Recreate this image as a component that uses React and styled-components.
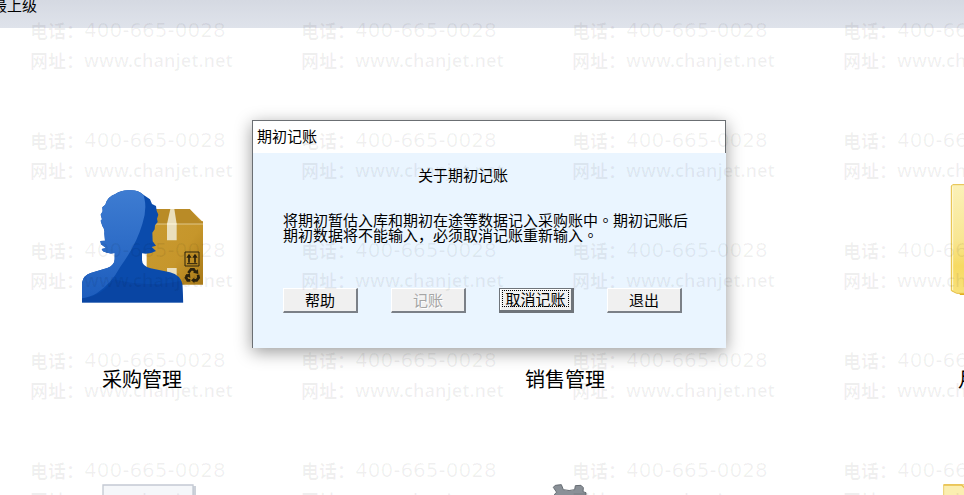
import styled, {createGlobalStyle} from 'styled-components'

const tiles = [
  {id: 'purchase', label: '采购管理', Icon: PurchaseIcon},
  {id: 'sales', label: '销售管理', Icon: SalesIcon},
  {id: 'month', label: '月结表', Icon: FolderIcon},
  {id: 'doc', Icon: DocIcon},
  {id: 'setting', Icon: GearIcon},
  {id: 'files', Icon: SmallFolderIcon},
]
const stamps = Array.from({length: 20}, (_, i) => i)

const App = () => {
  return (
    <Page>
      <GlobalStyle />
      <TopBar>
        <TopLink href="#top">返回最上级</TopLink>
      </TopBar>
      <TileGrid>
        {tiles.map(({id, label, Icon}) => (
          <Tile key={id} href={`#${id}`} aria-label={label || id}>
            <Icon />
            {label && <TileLabel>{label}</TileLabel>}
          </Tile>
        ))}
      </TileGrid>
      <Dialog role="dialog" aria-labelledby="dialog-title">
        <DialogTitle id="dialog-title">期初记账</DialogTitle>
        <DialogBody>
          <Heading>关于期初记账</Heading>
          <Message>
            将期初暂估入库和期初在途等数据记入采购账中<Stop>。</Stop>期初记账后<br />
            期初数据将不能输入，必须取消记账重新输入<Stop>。</Stop>
          </Message>
          <ButtonRow>
            <Button type="button">帮助</Button>
            <Button type="button" disabled>记账</Button>
            <Button type="button" $active><span>取消记账</span></Button>
            <Button type="button">退出</Button>
          </ButtonRow>
        </DialogBody>
      </Dialog>
      <Watermark aria-hidden="true">
        {stamps.map((n) => (
          <Stamp key={n}>
            <StampLine>电话：<Phone>400-665-0028</Phone></StampLine>
            <StampLine>网址：<Site>www.chanjet.net</Site></StampLine>
          </Stamp>
        ))}
      </Watermark>
    </Page>
  )
}

function PurchaseIcon() {
  return (
    <Picture viewBox="33 12 366 360">
      <defs>
        <linearGradient id="blue" x1="0" y1="0" x2="0" y2="1">
          <stop offset="0" stopColor="#3f7dd2" />
          <stop offset="1" stopColor="#1d5dbd" />
        </linearGradient>
        <linearGradient id="box" x1="0" y1="0" x2="1" y2="1">
          <stop offset="0" stopColor="#c99b32" />
          <stop offset="0.6" stopColor="#c6962b" />
          <stop offset="1" stopColor="#a87918" />
        </linearGradient>
        <clipPath id="person">
          <path d="M36 368V308Q40 286 62 279L112 264Q134 256 134 238V219Q116 223 99 214L95 207L108 204L93 193L91 183L105 182L103 160Q105 146 97 138L92 122L96 118L92 104L98 94L97 82L106 74Q112 50 136 42Q156 29 180 31Q204 30 220 44L240 58L246 72L258 78L260 92L265 104L261 116L263 126L255 136L254 148L247 158L248 184L258 197L245 201L258 213Q238 224 216 220V240Q216 258 242 265L300 277Q332 286 337 312L340 368Z" />
        </clipPath>
      </defs>
      <path d="M230 87H359L399 127V314H230Z" fill="url(#box)" />
      <path d="M250 87H359L390 124H399V132H250Z" fill="#b98b27" />
      <path d="M250 132H399" stroke="#efe3bd" strokeWidth="2" />
      <path d="M301 87H313L320 132V181H291V132Z" fill="#eadfbd" />
      <path d="M291 132H320" stroke="#fff8df" strokeWidth="3" />
      <path d="M291 264H320V300H291Z" fill="#eadfbd" />
      <g fill="none" stroke="#2b220c" strokeWidth="3">
        <path d="M345 216H387V258H345Z" />
        <path d="M351 251H382" />
        <path d="M357 248V229M375 248V229" strokeWidth="5" />
      </g>
      <path d="M349 233L357 221L365 233ZM367 233L375 221L383 233Z" fill="#2b220c" />
      <g fill="none" stroke="#2b220c" strokeWidth="8">
        <path d="M355 279L363 268H371L377 277" />
        <path d="M384 284L386 293L380 301H370" />
        <path d="M361 301H353L348 293L353 284" />
      </g>
      <path d="M369 278L385 282L384 268ZM373 293V309L363 301ZM345 286L360 280L361 294Z" fill="#2b220c" />
      <g clipPath="url(#person)">
        <path d="M30 20H345V370H30Z" fill="#0a4bac" />
        <path d="M30 20H210Q238 70 217 132Q198 196 151 260Q125 309 80 340Q60 352 30 356Z" fill="url(#blue)" />
        <path d="M30 356Q94 352 131 298Q240 326 345 300V370H30Z" fill="#083f9a" opacity="0.5" />
      </g>
    </Picture>
  )
}

function SalesIcon() {
  return (
    <Picture viewBox="0 0 122 120">
      <path d="M20 24H36L48 78H94L104 40H40" fill="none" stroke="#2a66be" strokeWidth="8" />
      <circle cx="54" cy="96" r="8" fill="#2a66be" />
      <circle cx="88" cy="96" r="8" fill="#2a66be" />
    </Picture>
  )
}

function FolderIcon() {
  return (
    <Picture viewBox="261 552 366 360">
      <defs>
        <linearGradient id="folder" x1="0" y1="0" x2="0" y2="1">
          <stop offset="0" stopColor="#fbf1b8" />
          <stop offset="0.5" stopColor="#f8e693" />
          <stop offset="0.75" stopColor="#f6da62" />
          <stop offset="1" stopColor="#f8e27c" />
        </linearGradient>
      </defs>
      <path d="M355 874H580V885H360Z" fill="#e2ad1e" />
      <path d="M338 554H600V880H350L334 872V558Z" fill="url(#folder)" stroke="#e5bd42" strokeWidth="3" />
      <path d="M338 560V870" stroke="#fff9d8" strokeWidth="3" />
    </Picture>
  )
}

function DocIcon() {
  return (
    <Picture viewBox="-27 432 366 360">
      <path d="M46 438H318V760H46Z" fill="#cdd2da" />
      <path d="M39 435H309V760H39Z" fill="#f5f7fa" stroke="#c3c9d3" strokeWidth="4" />
    </Picture>
  )
}

function GearIcon() {
  return (
    <Picture viewBox="12 402 366 360">
      <path d="M160 412Q164 404 174 405L184 404L190 419Q208 424 224 419L226 407L243 406L250 413L249 425L258 428L256 460H164V432L170 427Z" fill="#8a9097" stroke="#666c73" strokeWidth="3" />
    </Picture>
  )
}

function SmallFolderIcon() {
  return (
    <Picture viewBox="231 432 366 360">
      <path d="M281 434H500V760H281Z" fill="#fbeeb0" stroke="#edcf6c" strokeWidth="3" />
      <path d="M281 435H335L346 446H500" fill="none" stroke="#e9c04c" strokeWidth="4" />
    </Picture>
  )
}

const GlobalStyle = createGlobalStyle`
  * {
    box-sizing: border-box;
  }
  body {
    margin: 0;
    background: #fff;
    color: #000;
    font-family: "Noto Sans CJK SC", sans-serif;
    font-size: 15px;
  }
`
const Page = styled.div`
  position: relative;
  width: 100%;
  height: 100vh;
  overflow: hidden;
`
const TopBar = styled.header`
  display: flex;
  height: 28px;
  background: linear-gradient(#d5d9e2, #dfe3eb);
`
const TopLink = styled.a`
  margin-left: -38px;
  height: 10px;
  line-height: 10px;
  color: #000;
  text-decoration: none;
  white-space: nowrap;
`
const TileGrid = styled.main`
  display: grid;
  grid-template-columns: repeat(3, 284px);
  grid-auto-rows: 300px;
  column-gap: 139px;
  padding-top: 156px;
`
const Tile = styled.a`
  display: flex;
  flex-direction: column;
  align-items: center;
  gap: 63px;
  color: #000;
  text-decoration: none;
`
const Picture = styled.svg`
  width: 122px;
  height: 120px;
  flex-shrink: 0;
`
const TileLabel = styled.span`
  font-size: 20px;
  line-height: 24px;
`
const Dialog = styled.section`
  position: absolute;
  top: 120px;
  left: 252px;
  width: 474px;
  border-left: 1px solid #6b6f73;
  box-shadow: 0 4px 16px rgba(0, 0, 0, 0.4);
`
const DialogTitle = styled.h1`
  margin: 0;
  height: 33px;
  padding-left: 4px;
  border-top: 1px solid #6b6f73;
  border-right: 1px solid #6b6f73;
  background: #fff;
  font-size: 15px;
  font-weight: normal;
  line-height: 30px;
`
const DialogBody = styled.div`
  padding: 12px 30px 35px;
  background: #eaf5ff;
`
const Heading = styled.h2`
  margin: 0;
  padding-left: 135px;
  font-size: 15px;
  font-weight: normal;
  line-height: 20px;
`
const Message = styled.p`
  margin: 27px 0 46px;
  line-height: 15px;
  white-space: nowrap;
`
/* full stop sits in the middle of its cell */
const Stop = styled.span`
  font-family: "Noto Sans CJK TC", sans-serif;
`
const ButtonRow = styled.div`
  display: flex;
  gap: 33px;
`
const Button = styled.button`
  display: flex;
  align-items: center;
  justify-content: center;
  width: 75px;
  height: 25px;
  padding: 0 0 2px;
  border: solid;
  border-width: ${({$active}) => ($active ? '1px 3px 3px 1px' : '1px 2px 2px 1px')};
  border-color: ${({$active}) => ($active ? '#6f747a' : '#fff #7b8087 #7b8087 #fff')};
  box-shadow: ${({$active}) => ($active ? 'inset 1px 1px #fff' : 'none')};
  background: #f0f0f0;
  color: #000;
  font-family: inherit;
  font-size: 15px;
  line-height: 15px;
  white-space: nowrap;
  &:disabled {
    color: #a5a5a5;
    text-shadow: 1px 1px #fff;
  }
  & span {
    padding: 0 2px;
    outline: 1px dotted #000;
  }
`
const Watermark = styled.div`
  position: absolute;
  top: 15px;
  left: 30px;
  display: grid;
  grid-template-columns: repeat(4, 271px);
  grid-auto-rows: 110px;
  color: rgba(0, 0, 0, 0.06);
  pointer-events: none;
`
const Stamp = styled.div`
  display: flex;
  flex-direction: column;
`
const StampLine = styled.div`
  display: flex;
  align-items: center;
  height: 30px;
  font-size: 18px;
  font-weight: bold;
  line-height: 28px;
  white-space: nowrap;
`
const Phone = styled.span`
  font-family: "DejaVu Sans", sans-serif;
  font-size: 20px;
  font-weight: normal;
`
const Site = styled.span`
  font-family: "Noto Sans", sans-serif;
  font-size: 18px;
  font-weight: 600;
`

export default App
